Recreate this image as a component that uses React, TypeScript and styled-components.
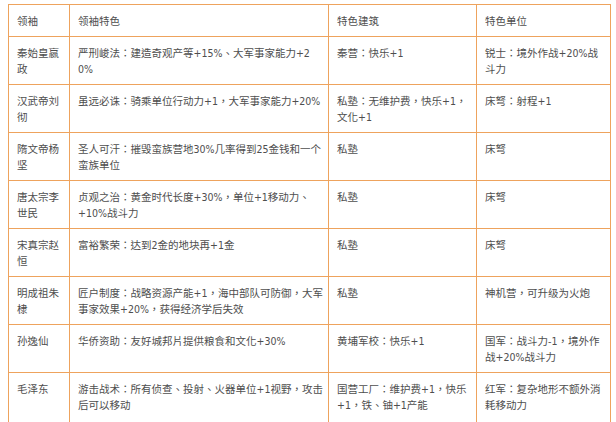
import React from 'react';
import styled, { createGlobalStyle } from 'styled-components';

type Row = [string, string, string, string];

// line breaks follow the original page's wrapping
const rows: Row[] = [
    ['秦始皇嬴\n政', '严刑峻法：建造奇观产等+15%、大军事家能力+2\n0%', '秦营：快乐+1', '锐士：境外作战+20%战\n斗力'],
    ['汉武帝刘\n彻', '虽远必诛：骑乘单位行动力+1，大军事家能力+20%', '私塾：无维护费，快乐+1，\n文化+1', '床弩：射程+1'],
    ['隋文帝杨\n坚', '圣人可汗：摧毁蛮族营地30%几率得到25金钱和一个\n蛮族单位', '私塾', '床弩'],
    ['唐太宗李\n世民', '贞观之治：黄金时代长度+30%，单位+1移动力、\n+10%战斗力', '私塾', '床弩'],
    ['宋真宗赵\n恒', '富裕繁荣：达到2金的地块再+1金', '私塾', '床弩'],
    ['明成祖朱\n棣', '匠户制度：战略资源产能+1，海中部队可防御，大军\n事家效果+20%，获得经济学后失效', '私塾', '神机营，可升级为火炮'],
    ['孙逸仙', '华侨资助：友好城邦片提供粮食和文化+30%', '黄埔军校：快乐+1', '国军：战斗力-1，境外作\n战+20%战斗力'],
    ['毛泽东', '游击战术：所有侦查、投射、火器单位+1视野，攻击\n后可以移动', '国营工厂：维护费+1，快乐\n+1，铁、铀+1产能', '红军：复杂地形不额外消\n耗移动力'],
];

const headers = ['领袖', '领袖特色', '特色建筑', '特色单位'];
const widths = [61, 259, 148, 134];

const GlobalStyle = createGlobalStyle`
    body {
        margin: 0;
        background: #fff;
    }
`;

const Table = styled.table`
    margin: 4px 0 0 8px;
    width: 602px;
    table-layout: fixed;
    border-collapse: collapse;
    font-family: 'DejaVu Sans Condensed', 'Liberation Sans', 'Noto Sans CJK TC', sans-serif;
    font-size: 10.5px;
    line-height: 16px;
    color: #4e4e4e;
`;

const Cell = styled.td<{ $head?: boolean }>`
    border: 1px solid #eea35d;
    padding: 8px 8px 7px;
    height: ${(p) => (p.$head ? '16px' : '32px')};
    vertical-align: top;
    text-align: left;
    white-space: pre;
    overflow: hidden;
`;

const BodyRow = styled.tr`
    &:last-child td {
        padding-bottom: 14px;
    }
`;

export default function App() {
    return (
        <>
            <GlobalStyle />
            <Table>
                <colgroup>
                    {widths.map((w, i) => (
                        <col key={i} style={{ width: w }} />
                    ))}
                </colgroup>
                <tbody>
                    <tr>
                        {headers.map((h) => (
                            <Cell key={h} $head>
                                {h}
                            </Cell>
                        ))}
                    </tr>
                    {rows.map((r, i) => (
                        <BodyRow key={i}>
                            {r.map((c, j) => (
                                <Cell key={j}>{c}</Cell>
                            ))}
                        </BodyRow>
                    ))}
                </tbody>
            </Table>
        </>
    );
}
